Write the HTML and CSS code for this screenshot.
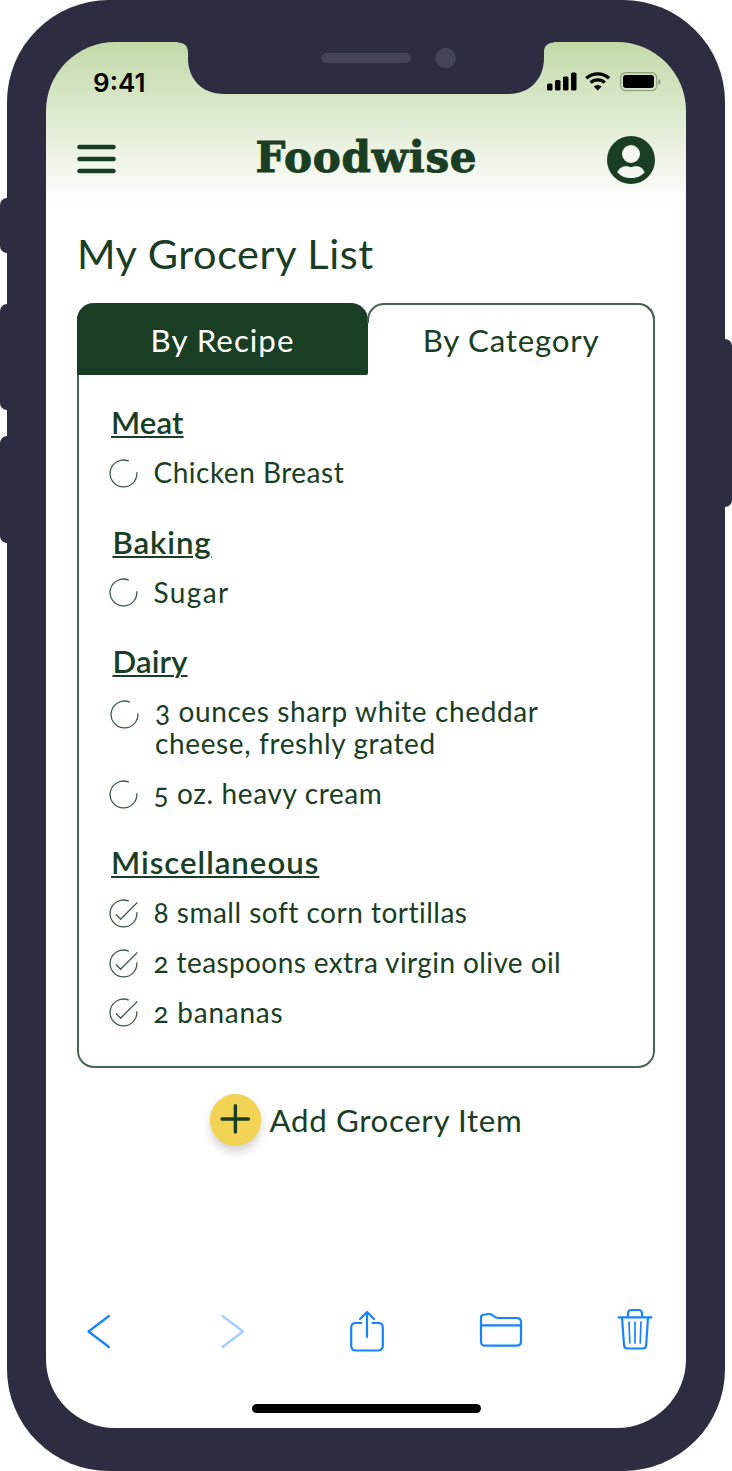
FILE: index.html
```html
<!DOCTYPE html>
<html lang="en">
<head>
<meta charset="utf-8">
<title>Foodwise</title>
<link rel="stylesheet" href="styles.css">
</head>
<body>
<svg class="defs" width="0" height="0" aria-hidden="true">
  <symbol id="ring" viewBox="0 0 29 29"><path d="M19.8 2.2A13.4 13.4 0 1 0 27.8 13.2"/></symbol>
  <symbol id="check" viewBox="0 0 29 29"><path d="M19.8 2.2A13.4 13.4 0 1 0 27.8 13.2M6.800 15.200L11.600 20.200L28.400 3.400"/></symbol>
</svg>
<div class="stage">
  <i class="key key-mute"></i><i class="key key-up"></i><i class="key key-down"></i><i class="key key-power"></i>
  <div class="phone">
    <div class="screen">
      <svg class="notch" viewBox="0 0 376 54" width="376" height="54">
        <path class="notch-body" d="M0 0H376V.5C370 .5 366 4 366 10V16C366 37 352 52 330 52H46C24 52 10 37 10 16V10C10 4 6 .5 0 .5Z"/>
        <rect class="notch-part" x="143" y="11" width="90" height="10" rx="5"/>
        <circle class="notch-part" cx="267.500" cy="16" r="10.300"/>
      </svg>
      <div class="status">
        <span class="time">9:41</span>
        <svg width="115" height="24" viewBox="0 0 115 24">
          <rect x="1" y="13.500" width="5.500" height="7" rx="1.500"/><rect x="9" y="10" width="5.500" height="10.500" rx="1.500"/><rect x="17" y="6.500" width="5.500" height="14" rx="1.500"/><rect x="25" y="2.500" width="5.500" height="18" rx="1.500"/>
          <g class="wifi"><path d="M40.300 8.200A17 17 0 0 1 63.100 8.200"/><path d="M44.600 12.600A10.500 10.500 0 0 1 58.800 12.600"/></g>
          <path d="M51.700 20.500L47.800 16.600A5.700 5.700 0 0 1 55.600 16.600Z"/>
          <rect class="battery" x="74.700" y="2.700" width="36" height="18" rx="5"/><rect x="77" y="5" width="31" height="13" rx="3"/><path class="cap" d="M112.500 9C115 9.800 115 13.800 112.500 14.600Z"/>
        </svg>
      </div>
      <header class="bar">
        <svg class="menu" width="40" height="30" viewBox="0 0 40 30"><path d="M2.500 2H36.500M2.500 14H36.500M2.500 26H36.500"/></svg>
        <span class="logo">Foodwise</span>
        <svg class="avatar" width="48" height="48" viewBox="0 0 48 48"><circle cx="24" cy="24" r="24"/><circle class="cut" cx="24" cy="18" r="9"/><path class="cut" d="M10.300 36.200C12.500 30.800 17.500 29.800 20 30.300C23 31.400 25 31.400 28 30.300C31 29.800 35.500 30.800 37.700 36.200C31.500 44 16.500 44 10.300 36.200Z"/></svg>
      </header>
      <h1>My Grocery List</h1>
      <section class="list">
        <div class="tabs"><div class="tab active"><span>By Recipe</span></div><div class="tab idle"><span>By Category</span></div></div>
        <div class="groups">
          <div class="group"><h2 class="meat">Meat</h2>
            <div class="item"><svg><use href="#ring"/></svg><span class="chicken">Chicken Breast</span></div></div>
          <div class="group"><h2 class="inset baking">Baking</h2>
            <div class="item"><svg><use href="#ring"/></svg><span class="sugar">Sugar</span></div></div>
          <div class="group"><h2 class="inset">Dairy</h2>
            <div class="item long"><svg><use href="#ring"/></svg><span>3 ounces sharp white cheddar<br>cheese, freshly grated</span></div>
            <div class="item"><svg><use href="#ring"/></svg><span>5 oz. heavy cream</span></div></div>
          <div class="group"><h2 class="misc">Miscellaneous</h2>
            <div class="item"><svg><use href="#check"/></svg><span class="tortillas">8 small soft corn tortillas</span></div>
            <div class="item"><svg><use href="#check"/></svg><span class="oil">2 teaspoons extra virgin olive oil</span></div>
            <div class="item"><svg><use href="#check"/></svg><span class="bananas">2 bananas</span></div></div>
        </div>
      </section>
      <div class="add"><span class="plus"><svg width="52" height="52" viewBox="0 0 52 52"><path d="M12 25H38.400M25.400 11.800V38"/></svg></span><span class="add-label">Add Grocery Item</span></div>
      <nav class="toolbar">
        <svg viewBox="0 0 26 44"><path d="M23 7L2.500 22.500L23 38"/></svg>
        <svg class="dim" viewBox="0 0 26 44"><path d="M2.500 7L23 22.500L2.500 38"/></svg>
        <svg viewBox="0 0 36 44"><path d="M12.200 14H6.500Q2.200 14 2.200 18.500V36.500Q2.200 41.500 7 41.500H29Q33.800 41.500 33.800 36.500V18.500Q33.800 14 29.500 14H23.500M18 28V3M11 10L18 3L25 10"/></svg>
        <svg viewBox="0 0 44 44"><path d="M2 14V8.500Q2 5.500 5.500 5.500L9.500 5Q12.500 4.800 14.500 7Q16.500 9 19.500 9H37.500Q42 9 42 13V32Q42 36.700 37.500 36.700H6.500Q2 36.700 2 32V14ZM2 16.300H42"/></svg>
        <svg viewBox="0 0 36 44"><path d="M1.500 8.300H34.500M11 8V4.500Q11 1 14.500 1H21.500Q25 1 25 4.500V8M5 8.300L7 36Q7.200 39.500 10.500 39.500H26Q29 39.500 29.200 36L31 8.300"/><path class="ribs" d="M12 13L12.800 34M18 13V34M24 13L23.200 34"/></svg>
      </nav>
      <div class="home"></div>
    </div>
  </div>
</div>
</body>
</html>
```
FILE: styles.css
```css
:root { --green: #193e24; --line: #456450; --shell: #2d2d42; }
* { box-sizing: border-box; }
body { margin: 0; background: #fff; color: var(--green); font-family: Lato, "Open Sans", sans-serif; }
.defs { position: absolute; }
.stage { position: relative; width: 732px; height: 1471px; padding: 0 7px; overflow: hidden; }
.phone { height: 1471px; padding: 42px 39px 43px; background: var(--shell); border-radius: 102px; }
.key { position: absolute; background: var(--shell); width: 16px; left: 0; border-radius: 7px; }
.key-mute { top: 198px; height: 55px; }
.key-up { top: 304px; height: 106px; }
.key-down { top: 436px; height: 107px; }
.key-power { top: 339px; height: 168px; left: 716px; }
.screen { position: relative; display: flex; flex-direction: column; height: 1386px; border-radius: 69px; background: linear-gradient(#c2d9a8 0, #fff 162px); overflow: hidden; padding: 0 31px; }
.notch { position: absolute; left: 132px; top: 0; }
.notch-body { fill: var(--shell); }
.notch-part { fill: #444357; }
.status { display: flex; justify-content: space-between; align-items: center; height: 46px; padding: 23px 0 0 16px; margin: 5px -6px 0 0; color: #000; }
.status svg { overflow: visible; }
.time { font: 600 26px/24px Inter, sans-serif; letter-spacing: 0; padding-top: 2px; }
.wifi { fill: none; stroke: #000; stroke-width: 3.200; }
.battery { fill: none; stroke: #000; stroke-opacity: .3; stroke-width: 1.200; }
.cap { fill-opacity: .4; }
.bar { display: flex; justify-content: space-between; align-items: center; height: 48px; margin-top: 43px; }
.menu { fill: none; stroke: var(--green); stroke-width: 4.600; stroke-linecap: round; overflow: visible; }
.logo { font: bold 42px/48px "DejaVu Serif", serif; letter-spacing: .8px; margin: -5px 0 0 9px; -webkit-text-stroke: 1px var(--green); }
.avatar { fill: var(--green); overflow: visible; }
.cut { fill: #f4f7f0; }
h1 { margin: 45px 0 0; font-size: 41.500px; line-height: 48px; font-weight: 400; letter-spacing: .55px; }
.list { height: 765px; margin-top: 26px; border: 2px solid var(--line); border-top: 0; border-radius: 17px; }
.tabs { display: flex; margin: 0 -2px; height: 72px; font-size: 31.300px; line-height: 74px; text-align: center; }
.active { flex: 0 0 291px; background: var(--green); color: #fff; border-radius: 17px 17px 2px 0; letter-spacing: 1px; }
.idle { flex: 1; margin-left: -1px; border: 2px solid var(--line); border-bottom: 0; border-radius: 17px 17px 0 0; line-height: 70px; letter-spacing: .75px; clip-path: polygon(0 0, 100% 0, 100% 100%, 2px 100%, 2px 20px, 0 20px); }
.groups { display: flex; flex-direction: column; gap: 34.800px; padding: 29.300px 0 0 30px; }
h2 { margin: 0 0 16.200px 2px; font-size: 31.200px; line-height: 36px; font-weight: 600; letter-spacing: .1px; text-decoration: underline; text-decoration-thickness: 1.700px; text-underline-offset: 2px; }
.inset { margin-left: 3.500px; }
.baking { letter-spacing: .9px; }
.misc { letter-spacing: 1px; }
.item { display: flex; gap: 15.500px; font-size: 28px; line-height: 32.300px; font-variant-numeric: oldstyle-nums; letter-spacing: .62px; white-space: nowrap; }
.item + .item { margin-top: 17.400px; }
.item svg { width: 29px; height: 29px; margin: 2.500px .5px 0 -.5px; fill: none; stroke: var(--green); stroke-width: 1.300; stroke-opacity: .85; }
.long { padding-left: 1.500px; }
.long svg { margin-top: 4.500px; }
.chicken { letter-spacing: .5px; }
.sugar { letter-spacing: 1.350px; }
.tortillas { letter-spacing: .5px; }
.oil { letter-spacing: .4px; }
.bananas { letter-spacing: .75px; }
.add { display: flex; align-items: center; gap: 8.500px; margin: 26px 0 0 132.500px; font-size: 31.300px; line-height: 52px; letter-spacing: .63px; }
.plus { width: 51.500px; height: 51.500px; border-radius: 50%; background: #f2d354; box-shadow: 0 6px 9px rgba(0,0,0,.17); }
.plus svg { display: block; fill: none; stroke: var(--green); stroke-width: 3.400; stroke-linecap: round; }
.toolbar { display: flex; justify-content: space-between; margin: 163px -1.500px 0 -.5px; }
.toolbar svg { width: 44px; height: 44px; fill: none; stroke: #1684ff; stroke-width: 2.200; stroke-linecap: round; stroke-linejoin: round; overflow: visible; }
.toolbar .dim { opacity: .4; }
.toolbar .ribs { stroke-width: 1.700; }
.home { width: 229px; height: 9px; border-radius: 5px; background: #000; margin: 51px auto 0 175px; }
```
